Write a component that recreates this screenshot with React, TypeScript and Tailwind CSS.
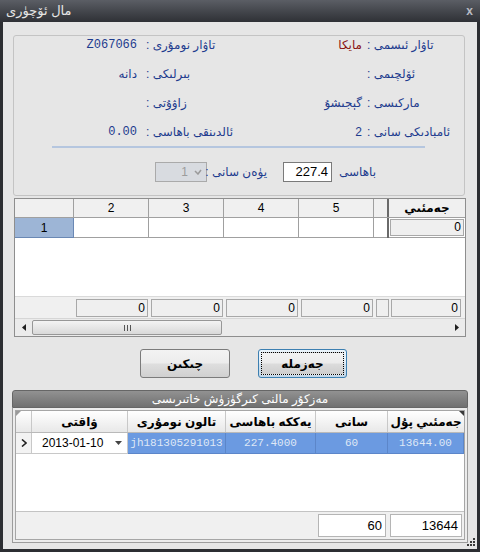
import React from "react";

const navy = "text-[#1e3c8e]";

type InfoRowProps = {
  leftValue?: string;
  leftLabel: string;
  rightValue?: string;
  rightLabel: string;
  leftMono?: boolean;
  rightRed?: boolean;
};

const InfoRow = ({ leftValue, leftLabel, rightValue, rightLabel, leftMono, rightRed }: InfoRowProps) => (
  <div className={`flex items-center h-[18px] ${navy}`}>
    <div
      className={`w-[126px] text-right pr-[3px] ${leftMono ? "font-['Liberation_Mono',monospace] text-[12px]" : ""}`}
      dir={leftMono ? "ltr" : "rtl"}
    >
      {leftValue}
    </div>
    <div dir="rtl" className="w-[122px] pl-[6px] text-left whitespace-nowrap">
      {leftLabel}
    </div>
    <div dir="rtl" className={`w-[100px] pl-[2px] text-left ${rightRed ? "text-[#8a1212]" : ""}`}>
      <span className="block text-right" dir="rtl">{rightValue}</span>
    </div>
    <div dir="rtl" className="flex-1 pl-[5px] text-left whitespace-nowrap">
      {rightLabel}
    </div>
  </div>
);

const TriLeft = () => (
  <svg width="4" height="7" viewBox="0 0 4 7">
    <path d="M4 0 L0 3.5 L4 7 Z" fill="#202020" />
  </svg>
);

const TriRight = () => (
  <svg width="4" height="7" viewBox="0 0 4 7">
    <path d="M0 0 L4 3.5 L0 7 Z" fill="#202020" />
  </svg>
);

// top grid: per-month totals
const PriceGrid = () => {
  const cols = ["2", "3", "4", "5"];
  return (
    <div className="mt-[2px] mx-[2px] h-[139px] border border-[#8e8e8e] bg-white flex flex-col">
      <div className="h-[19px] flex bg-[#f0f0f0] border-b border-[#a0a0a0]">
        <div className="w-[59px] border-r border-[#a0a0a0]" />
        {cols.map((c) => (
          <div key={c} className="w-[75px] border-r border-[#a0a0a0] flex items-center justify-center">
            {c}
          </div>
        ))}
        <div className="w-[13px]" />
        <div className="w-[2px] bg-[#6a6a6a]" />
        <div dir="rtl" className="flex-1 flex items-center justify-center font-bold">
          جەمئىي
        </div>
      </div>
      <div className="h-[20px] flex">
        <div className="w-[59px] bg-[#9db5d6] border-r border-b border-[#6a88b4] flex items-center justify-center">
          1
        </div>
        {cols.map((c) => (
          <div key={c} className="w-[75px] border-r border-b border-[#a0a0a0]" />
        ))}
        <div className="w-[13px] border-b border-[#a0a0a0]" />
        <div className="w-[2px] bg-[#6a6a6a]" />
        <div className="flex-1 px-[1px] py-[1px] border-b border-[#a0a0a0]">
          <div className="h-full border border-[#a8a8a8] bg-[#efefef] text-right pr-[2px] leading-[15px]">0</div>
        </div>
      </div>
      <div className="flex-1 bg-white" />
      <div className="h-[22px] flex items-center bg-[#f0f0f0] border-t border-[#dadada]">
        <div className="w-[59px]" />
        {cols.map((c) => (
          <div key={c} className="w-[75px] pl-[2px] pr-[1px]">
            <div className="h-[18px] border border-[#a8a8a8] bg-[#efefef] text-right pr-[2px] leading-[16px]">0</div>
          </div>
        ))}
        <div className="w-[15px] pl-[2px]">
          <div className="h-[18px] border border-[#a8a8a8] bg-[#efefef]" />
        </div>
        <div className="flex-1 pl-[2px] pr-[4px]">
          <div className="h-[18px] border border-[#a8a8a8] bg-[#efefef] text-right pr-[2px] leading-[16px]">0</div>
        </div>
      </div>
      <div className="h-[18px] flex items-center bg-[#ebebeb] border-t border-[#d6d6d6]">
        <div className="w-[17px] flex items-center justify-center">
          <TriLeft />
        </div>
        <div className="w-[190px] h-[15px] rounded-[2px] border border-[#979797] bg-linear-to-b from-[#f4f4f4] to-[#d9d9d9] flex items-center justify-center gap-[2px]">
          <div className="w-px h-[6px] bg-[#555]" />
          <div className="w-px h-[6px] bg-[#555]" />
          <div className="w-px h-[6px] bg-[#555]" />
        </div>
        <div className="flex-1" />
        <div className="w-[17px] flex items-center justify-center">
          <TriRight />
        </div>
      </div>
    </div>
  );
};

const Buttons = () => (
  <div className="mt-[12px] h-[29px] flex">
    <button className="ml-[128px] w-[90px] h-[29px] rounded-[3px] border border-[#7b7b7b] bg-[linear-gradient(to_bottom,#f3f3f3_0%,#ececec_48%,#dedede_52%,#d0d0d0_100%)] font-bold text-[12px]">
      <span dir="rtl">چىكىن</span>
    </button>
    <button className="ml-[28px] w-[89px] h-[29px] rounded-[3px] border border-[#3c7fb1] bg-[linear-gradient(to_bottom,#eaf4fb_0%,#e3eef7_48%,#d2e2ee_52%,#c4d8e8_100%)] p-[2px]">
      <div className="h-full border border-dotted border-black bg-[linear-gradient(to_bottom,#f2f2f2_0%,#ebebeb_48%,#dcdcdc_52%,#cecece_100%)] flex items-center justify-center font-bold text-[12px]">
        <span dir="rtl">جەزملە</span>
      </div>
    </button>
  </div>
);

// bottom grid: saved entries of this item
const History = () => {
  const head = "border-r border-[#c8c8c8] flex items-center justify-center font-bold";
  const blue = "border-r border-b border-[#5c86c9] bg-[#6b9ae1] text-[#dfe8f6] flex items-center justify-center font-['Liberation_Mono',monospace] text-[11px]";
  return (
    <div className="mt-[12px] flex flex-col">
      <div className="h-[18px] rounded-t-[3px] border border-[#666] bg-linear-to-b from-[#929292] to-[#707070] text-white flex items-center justify-center">
        <span dir="rtl">مەزكۇر مالنى كىرگۈزۈش خاتىرىسى</span>
      </div>
      <div className="h-[135px] border border-t-0 border-[#9c9c9c] bg-[#ececec] px-[2px] pt-[2px] pb-[2px] flex">
        <div className="flex-1 border border-[#a6a6a6] bg-white flex flex-col">
          <div className="h-[22px] flex bg-linear-to-b from-white to-[#e8e8e8] border-b border-[#b9b9b9]">
            <div className="w-[16px] border-r border-[#c8c8c8] relative">
              <svg className="absolute left-0 top-0" width="5" height="5" viewBox="0 0 5 5">
                <path d="M0 0 H5 L0 5 Z" fill="#9a9a9a" />
              </svg>
            </div>
            <div className={`w-[96px] ${head}`} dir="rtl">ۋاقتى</div>
            <div className={`w-[98px] ${head}`} dir="rtl">تالون نومۇرى</div>
            <div className={`w-[90px] ${head}`} dir="rtl">يەككە باھاسى</div>
            <div className={`w-[72px] ${head}`} dir="rtl">سانى</div>
            <div className="flex-1 flex items-center justify-center font-bold relative" dir="rtl">
              جەمئىي پۇل
              <svg className="absolute right-0 top-0" width="5" height="5" viewBox="0 0 5 5">
                <path d="M0 0 H5 V5 Z" fill="#3a3a3a" />
              </svg>
            </div>
          </div>
          <div className="h-[21px] flex">
            <div className="w-[16px] border-r border-b border-[#c8c8c8] bg-[#f3f3f3] flex items-center justify-center">
              <svg width="6" height="8" viewBox="0 0 6 8">
                <path d="M1 0.5 L5 4 L1 7.5" stroke="#222" strokeWidth="1.6" fill="none" />
              </svg>
            </div>
            <div className="w-[96px] border-r border-b border-[#c8c8c8] flex items-center pl-[10px] pr-[5px]">
              <span>2013-01-10</span>
              <div className="flex-1" />
              <svg width="7" height="4" viewBox="0 0 7 4">
                <path d="M0 0 H7 L3.5 4 Z" fill="#444" />
              </svg>
            </div>
            <div className={`w-[98px] ${blue}`}>jh181305291013</div>
            <div className={`w-[90px] ${blue}`}>227.4000</div>
            <div className={`w-[72px] ${blue}`}>60</div>
            <div className={`flex-1 ${blue}`}>13644.00</div>
          </div>
          <div className="flex-1 bg-white" />
          <div className="h-[28px] flex items-center bg-[#f0f0f0] border-t border-[#c3c3c3]">
            <div className="w-[302px]" />
            <div className="w-[68px] h-[23px] border border-[#b5b5b5] bg-white text-right pr-[3px] text-[13px] leading-[21px]">60</div>
            <div className="ml-[4px] w-[72px] h-[23px] border border-[#b5b5b5] bg-white text-right pr-[3px] text-[13px] leading-[21px]">13644</div>
          </div>
        </div>
      </div>
    </div>
  );
};

export default function App() {
  return (
    <div className="w-[480px] h-[552px] flex flex-col bg-[#2c2e32] font-['Liberation_Sans','DejaVu_Sans',sans-serif] text-[12px] text-black">
      <div className="h-[22px] flex items-center justify-between pl-[6px] pr-[7px] bg-linear-to-b from-[#5b5e65] to-[#2f3136]">
        <span dir="rtl" className="text-[#e6e6e6] text-[13px]">مال ئۆچۈرى</span>
        <span className="text-[#b8bcc4] font-bold text-[12px]">x</span>
      </div>
      <div className="flex-1 mx-[3px] mb-[3px] bg-[#e6e6e6] flex flex-col px-[9px] relative">
        <div className="mt-[13px] ml-[1px] mr-[3px] h-[161px] border border-[#c4c4c4] rounded-[3px] flex flex-col">
          <div className="flex flex-col gap-[11px]">
            <InfoRow leftValue="Z067066" leftMono leftLabel="تاۋار نومۇرى :" rightValue="مايكا" rightRed rightLabel="تاۋار ئىسمى :" />
            <InfoRow leftValue="دانە" leftLabel="بىرلىكى :" rightLabel="ئۆلچىمى :" />
            <InfoRow leftLabel="زاۋۇتى :" rightValue="گېجىشۇ" rightLabel="ماركىسى :" />
            <InfoRow leftValue="0.00" leftMono leftLabel="ئالدىنقى باھاسى :" rightValue="2" rightLabel="ئامبادىكى سانى :" />
          </div>
          <div className="mt-[5px] ml-[38px] w-[373px] h-[2px] bg-[#b5c6df]" />
          <div className={`mt-[14px] h-[20px] flex items-center ${navy}`}>
            <div className="ml-[141px] w-[52px] h-[20px] border border-[#aaaaaa] bg-[#d8dbe0] flex items-center justify-end pr-[4px] gap-[6px] text-[#9c9c9c]">
              <span>1</span>
              <svg width="8" height="6" viewBox="0 0 8 6">
                <path d="M1 2 L4 5 L7 1" stroke="#9a9a9a" strokeWidth="1.5" fill="none" />
              </svg>
            </div>
            <div dir="rtl" className="w-[68px] text-right pr-[8px] whitespace-nowrap">
              يۈەن سانى :
            </div>
            <div className="ml-[8px] w-[49px] h-[20px] border border-[#7a7a7a] bg-white text-right pr-[3px] text-[13px] text-black leading-[18px]">
              227.4
            </div>
            <div dir="rtl" className="ml-[7px]">
              باھاسى
            </div>
          </div>
        </div>
        <PriceGrid />
        <Buttons />
        <History />
        <svg className="absolute right-[2px] bottom-[2px]" width="8" height="9" viewBox="0 0 8 9">
          <rect x="6" y="0" width="2" height="2" fill="#3a3a3a" />
          <rect x="3" y="3" width="2" height="2" fill="#3a3a3a" />
          <rect x="6" y="3" width="2" height="2" fill="#3a3a3a" />
          <rect x="0" y="6" width="2" height="2" fill="#3a3a3a" />
          <rect x="3" y="6" width="2" height="2" fill="#3a3a3a" />
          <rect x="6" y="6" width="2" height="2" fill="#3a3a3a" />
        </svg>
      </div>
    </div>
  );
}
